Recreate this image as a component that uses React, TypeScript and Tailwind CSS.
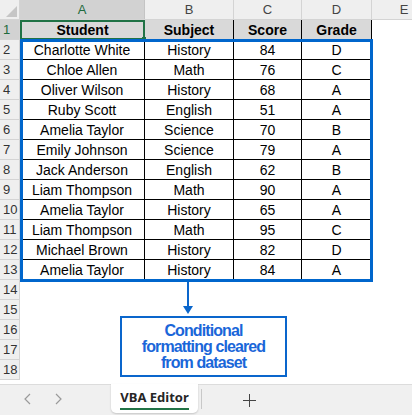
import React from "react";

const rows = [
  ["Charlotte White", "History", "84", "D"],
  ["Chloe Allen", "Math", "76", "C"],
  ["Oliver Wilson", "History", "68", "A"],
  ["Ruby Scott", "English", "51", "A"],
  ["Amelia Taylor", "Science", "70", "B"],
  ["Emily Johnson", "Science", "79", "A"],
  ["Jack Anderson", "English", "62", "B"],
  ["Liam Thompson", "Math", "90", "A"],
  ["Amelia Taylor", "History", "65", "A"],
  ["Liam Thompson", "Math", "95", "C"],
  ["Michael Brown", "History", "82", "D"],
  ["Amelia Taylor", "History", "84", "A"],
];

const widths = ["w-[125px]", "w-[89px]", "w-[68px]", "w-[70px]"];

function RowHead({ n, active }: { n: number; active?: boolean }) {
  return (
    <div
      className={`w-[20px] h-[20px] shrink-0 border-r border-b border-[#d4d4d4] pl-[3px] text-[13px] leading-[20px] ${
        active ? "bg-[#d2d2d2] text-[#1e6b3d]" : "bg-[#efefef] text-[#333]"
      }`}
    >
      {n}
    </div>
  );
}

export default function App() {
  return (
    <div className="w-[412px] h-[415px] overflow-hidden bg-white flex flex-col font-['Liberation_Sans',Arial,sans-serif]">
      {/* sheet */}
      <div className="relative h-[384px] overflow-hidden">
        {/* column letters */}
        <div className="flex h-[20px] bg-[#efefef] border-b border-[#d4d4d4] text-[13px] leading-[20px] text-[#444]">
          <div className="w-[20px] shrink-0 border-r border-[#d4d4d4] relative">
            <svg className="absolute right-[2px] bottom-[2px]" width="11" height="11" viewBox="0 0 11 11">
              <polygon points="11,0 11,11 0,11" fill="#c6c6c6" />
            </svg>
          </div>
          <div className="w-[125px] shrink-0 text-center bg-[#d2d2d2] text-[#1e6b3d] border-r border-[#c4c4c4]">A</div>
          <div className="w-[89px] shrink-0 text-center border-r border-[#d4d4d4]">B</div>
          <div className="w-[68px] shrink-0 text-center border-r border-[#d4d4d4]">C</div>
          <div className="w-[70px] shrink-0 text-center border-r border-[#d4d4d4]">D</div>
          <div className="w-[64px] shrink-0 text-center">E</div>
        </div>

        {/* header row */}
        <div className="flex h-[20px]">
          <RowHead n={1} active />
          <div className="relative w-[125px] h-[20px] shrink-0 bg-[#d9d9d9] border-2 border-[#217346] text-center font-bold text-[14px] leading-[16px] text-black">
            Student
            <div className="absolute -right-[3px] -bottom-[3px] w-[4px] h-[4px] bg-[#217346]" />
          </div>
          {["Subject", "Score", "Grade"].map((h, i) => (
            <div
              key={h}
              className={`${widths[i + 1]} h-[20px] shrink-0 bg-[#d9d9d9] border-r border-b border-black text-center font-bold text-[14px] leading-[20px] text-black`}
            >
              {h}
            </div>
          ))}
        </div>

        {/* data rows */}
        {rows.map((r, ri) => (
          <div key={ri} className="flex h-[20px]">
            <RowHead n={ri + 2} />
            {r.map((c, ci) => (
              <div
                key={ci}
                className={`${widths[ci]} h-[20px] shrink-0 border-r border-b border-black text-center text-[14px] leading-[21px] text-black`}
              >
                {c}
              </div>
            ))}
          </div>
        ))}

        {/* empty rows with callout */}
        <div className="flex">
          <div className="flex flex-col">
            {[14, 15, 16, 17, 18].map((n) => (
              <RowHead key={n} n={n} />
            ))}
          </div>
          <div className="flex flex-col pt-[2px]">
            <svg className="ml-[162px]" width="12" height="33" viewBox="0 0 12 33">
              <line x1="6" y1="0" x2="6" y2="26" stroke="#0a66cc" strokeWidth="2" />
              <polygon points="1,24 11,24 6,32" fill="#0a66cc" />
            </svg>
            <div className="ml-[100px] mt-[1px] w-[167px] h-[61px] border-2 border-[#0a66cc] bg-white flex flex-col items-center justify-center text-[16px] leading-[16px] font-bold tracking-[-0.9px] text-[#1a66d9]">
              <span>Conditional</span>
              <span>formatting cleared</span>
              <span>from dataset</span>
            </div>
          </div>
        </div>

        {/* highlight around the data */}
        <div className="absolute left-[20px] top-[39px] w-[353px] h-[243px] border-[3px] border-[#0066cc] pointer-events-none" />
      </div>

      {/* sheet tabs */}
      <div className="relative flex items-start h-[31px] bg-[#f0f0f0] border-t border-[#dcdcdc]">
        <svg className="ml-[23px] mt-[8px]" width="8" height="12" viewBox="0 0 8 12">
          <polyline points="7,1 2,6 7,11" fill="none" stroke="#9a9a9a" strokeWidth="1.2" />
        </svg>
        <svg className="ml-[24px] mt-[8px]" width="8" height="12" viewBox="0 0 8 12">
          <polyline points="1,1 6,6 1,11" fill="none" stroke="#9a9a9a" strokeWidth="1.2" />
        </svg>
        <div className="ml-[48px] -mt-px w-[87px] h-[29px] bg-white rounded-b-[5px] shadow-[0_1px_2px_rgba(0,0,0,0.18)] flex flex-col items-center pt-[5px]">
          <span className="text-[13px] leading-[16px] font-bold text-[#262626] font-['Noto_Sans',sans-serif]">VBA Editor</span>
          <div className="mt-[3px] w-[69px] h-[2px] bg-[#217346]" />
        </div>
        <div className="ml-[3px] mt-[4px] w-px h-[20px] bg-[#c8c8c8]" />
        <svg className="ml-[41px] mt-[9px]" width="13" height="13" viewBox="0 0 13 13">
          <line x1="6.5" y1="0" x2="6.5" y2="13" stroke="#444" strokeWidth="1" />
          <line x1="0" y1="6.5" x2="13" y2="6.5" stroke="#444" strokeWidth="1" />
        </svg>
      </div>
    </div>
  );
}
